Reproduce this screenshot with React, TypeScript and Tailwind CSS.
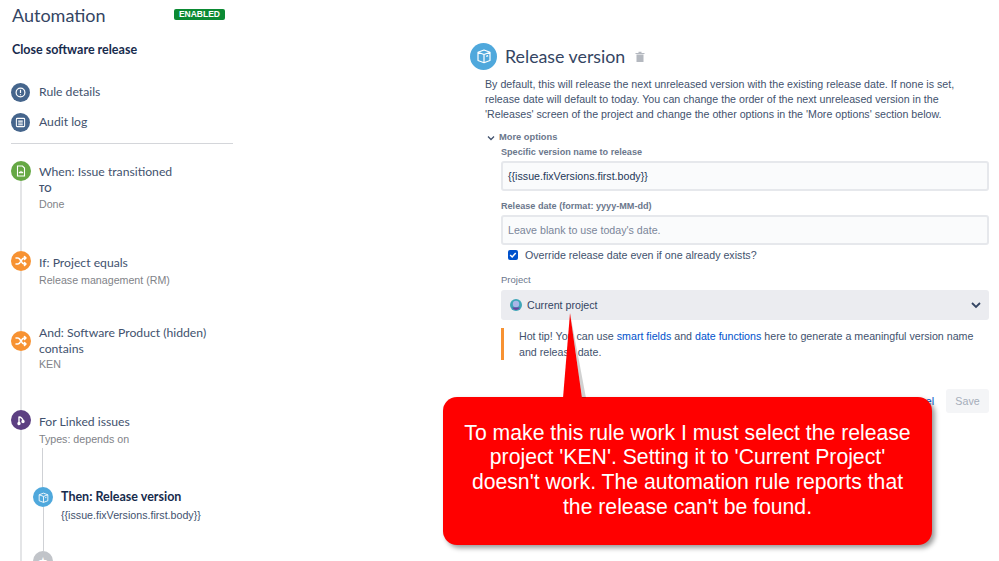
import React from "react";

const Shuffle = () => (
  <svg width="12" height="12" viewBox="0 0 24 24" fill="none" stroke="white" strokeWidth="3" strokeLinecap="round" strokeLinejoin="round">
    <path d="M2 6h4c5 0 7 12 12 12h4M2 18h4c5 0 7-12 12-12h4M19 3l3 3-3 3M19 15l3 3-3 3" />
  </svg>
);

const Box = ({ s }: { s: number }) => (
  <svg width={s} height={s} viewBox="0 0 24 24" fill="none" stroke="white" strokeWidth="1.6" strokeLinejoin="round">
    <path d="M4 7l8-3 8 3v11l-8 3-8-3zM4 7l8 3 8-3M12 10v11" />
    <path d="M15 12.5l2.5-1" />
  </svg>
);

function Row({ h, color, icon, title, titleClass, sub, children }: { h: string; color: string; icon: React.ReactNode; title: React.ReactNode; titleClass: string; sub?: React.ReactNode; children?: React.ReactNode }) {
  return (
    <div className={`flex ${h}`}>
      <div className="flex w-[20px] shrink-0 flex-col items-center">
        <div className={`flex h-[20px] w-[20px] shrink-0 items-center justify-center rounded-full ${color}`}>{icon}</div>
        <div className="w-[2px] flex-1 bg-[#e4e5e7]" />
      </div>
      <div className="ml-[8px] min-w-0 flex-1">
        <div className={`text-[12.2px] text-[#42526e] [font-family:Lato,sans-serif] ${titleClass}`}>{title}</div>
        {sub}
        {children}
      </div>
    </div>
  );
}

const Sub = ({ children, className = "" }: { children: React.ReactNode; className?: string }) => (
  <div className={`text-[10.67px] text-[#7f8388] [font-family:'Liberation_Sans',sans-serif] ${className}`}>{children}</div>
);

export default function App() {
  return (
    <div className="relative flex h-[561px] w-[999px] overflow-hidden bg-white text-[#42526e] [font-family:'Liberation_Sans',sans-serif]">
      <aside className="ml-[11px] flex h-[561px] w-[222px] shrink-0 flex-col overflow-hidden">
        <div className="mt-[3px] flex h-[24px] items-center justify-between pl-[1px] pr-[8px]">
          <span className="text-[18px] leading-[24px] text-[#344563] [font-family:Lato,sans-serif]">Automation</span>
          <span className="mb-[1px] rounded-[2px] bg-[#0b8a33] px-[5px] text-[8.5px] font-bold leading-[11px] text-white">ENABLED</span>
        </div>
        <div className="ml-[1px] mt-[15px] text-[12.5px] font-bold leading-[16px] text-[#172b4d] [font-family:Lato,sans-serif]">Close software release</div>
        <div className="mt-[24px] flex h-[20px] items-center gap-[9px] text-[12.2px] text-[#42526e] [font-family:Lato,sans-serif]">
          <span className="flex h-[19px] w-[19px] items-center justify-center rounded-full bg-[#45658c]">
            <svg width="11" height="11" viewBox="0 0 12 12" fill="none" stroke="white" strokeWidth="1.3"><circle cx="6" cy="6" r="4.8" /><path d="M6 3v3.6M6 8v1" /></svg>
          </span>
          Rule details
        </div>
        <div className="mt-[10px] flex h-[20px] items-center gap-[9px] text-[12.2px] text-[#42526e] [font-family:Lato,sans-serif]">
          <span className="flex h-[19px] w-[19px] items-center justify-center rounded-full bg-[#45658c]">
            <svg width="11" height="11" viewBox="0 0 12 12" fill="none" stroke="white" strokeWidth="1.1"><rect x="1.5" y="1.5" width="9" height="9" rx="1" /><path d="M3.5 4.5h5M3.5 6.5h5M3.5 8.5h5" /></svg>
          </span>
          Audit log
        </div>
        <div className="mt-[11px] h-[1px] w-[222px] shrink-0 bg-[#d4d6da]" />
        <div className="mt-[17px] flex-1">
          <Row
            h="h-[90px]"
            color="bg-[#65a844]"
            icon={<svg width="12" height="12" viewBox="0 0 12 12" fill="none" stroke="white" strokeWidth="1.1"><path d="M2.5 1h5l2 2v8h-7z" /><path d="M4 7l1 1 1-1.5 1 1.5 1-1" /></svg>}
            title="When: Issue transitioned"
            titleClass="mt-[3px] leading-[15px]"
            sub={<><div className="mt-[3px] text-[9px] font-bold leading-[14px] text-[#42526e] [font-family:Lato,sans-serif]">TO</div><Sub className="leading-[17px]">Done</Sub></>}
          />
          <Row h="h-[80px]" color="bg-[#f79232]" icon={<Shuffle />} title="If: Project equals" titleClass="mt-[4px] leading-[15px]" sub={<Sub className="mt-[2px] leading-[17px]">Release management (RM)</Sub>} />
          <Row h="h-[79px]" color="bg-[#f79232]" icon={<Shuffle />} title="And: Software Product (hidden) contains" titleClass="-mt-[6px] leading-[16px]" sub={<Sub className="leading-[15px]">KEN</Sub>} />
          <Row
            h="h-[151px]"
            color="bg-[#5c3f82]"
            icon={<svg width="12" height="12" viewBox="0 0 12 12" fill="none" stroke="white" strokeWidth="1.4"><path d="M4 2.5v7M4 3c2 0 4 2 4 4" /><circle cx="4" cy="9.5" r="1" fill="white" /><circle cx="8" cy="7.5" r="1" fill="white" /></svg>}
            title="For Linked issues"
            titleClass="mt-[4px] leading-[15px]"
            sub={<Sub className="mt-[2px] leading-[17px]">Types: depends on</Sub>}
          >
            <div className="-ml-[6px] flex h-[39px]">
              <div className="ml-[9px] w-[1px] bg-[#cfd1d5]" />
            </div>
            <div className="-ml-[6px] flex h-[64px]">
              <div className="flex w-[20px] flex-col items-center">
                <div className="flex h-[20px] w-[20px] shrink-0 items-center justify-center rounded-full bg-[#4fa8dc]"><Box s={13} /></div>
                <div className="w-[1px] flex-1 bg-[#cfd1d5]" />
              </div>
              <div className="ml-[8px]">
                <div className="text-[12.5px] font-bold leading-[20px] text-[#172b4d] [font-family:Lato,sans-serif]">Then: Release version</div>
                <div className="text-[10.67px] leading-[17px] text-[#42526e]">{"{{issue.fixVersions.first.body}}"}</div>
              </div>
            </div>
            <div className="-ml-[6px] flex h-[20px] w-[20px] items-center justify-center rounded-full bg-[#c1c4c9]">
              <span className="text-[11px] leading-none text-white">★</span>
            </div>
          </Row>
        </div>
      </aside>

      <main className="ml-[237px] flex w-[519px] shrink-0 flex-col">
        <div className="mt-[43px] flex h-[26px] items-center">
          <span className="flex h-[27px] w-[27px] items-center justify-center rounded-full bg-[#4fa8dc]"><Box s={18} /></span>
          <span className="ml-[8px] text-[17.8px] leading-[26px] text-[#344563] [font-family:Lato,sans-serif]">Release version</span>
          <svg className="ml-[10px] mt-[1px]" width="10" height="11" viewBox="0 0 10 11" fill="#b4b8bf"><path d="M0.5 2h9v1h-9zM3.5 0.7h3V2h-3zM1.5 3.5h7V11h-7z" /></svg>
        </div>
        <div className="ml-[15px] mt-[8px] w-[484px] text-[10.67px] leading-[15px] text-[#42526e]">
          By default, this will release the next unreleased version with the existing release date. If none is set, release date will default to today. You can change the order of the next unreleased version in the 'Releases' screen of the project and change the other options in the 'More options' section below.
        </div>
        <div className="ml-[17px] mt-[8px] flex h-[15px] items-center gap-[4px] text-[9.3px] font-bold text-[#6b778c]">
          <svg width="8" height="8" viewBox="0 0 8 8" fill="none" stroke="#42526e" strokeWidth="1.3"><path d="M1 2.5l3 3 3-3" /></svg>
          More options
        </div>
        <div className="ml-[31px] flex w-[488px] flex-col">
          <div className="text-[9.1px] font-bold leading-[15px] text-[#6b778c]">Specific version name to release</div>
          <div className="mt-[1px] flex h-[30px] items-center rounded-[3px] border-2 border-[#e6e8ec] bg-[#fafbfc] px-[5px] text-[10.67px] text-[#253858]">{"{{issue.fixVersions.first.body}}"}</div>
          <div className="mt-[8px] text-[9.1px] font-bold leading-[15px] text-[#6b778c]">Release date (format: yyyy-MM-dd)</div>
          <div className="mt-[1px] flex h-[30px] items-center rounded-[3px] border-2 border-[#e6e8ec] bg-[#fafbfc] px-[5px] text-[10.67px] text-[#7a869a]">Leave blank to use today's date.</div>
          <div className="ml-[7px] mt-[1px] flex h-[17px] items-center gap-[7px] text-[10.67px] text-[#42526e]">
            <span className="flex h-[10px] w-[10px] items-center justify-center rounded-[2px] bg-[#0052cc]">
              <svg width="8" height="8" viewBox="0 0 8 8" fill="none" stroke="white" strokeWidth="1.5"><path d="M1.2 4l2 2 3.5-4" /></svg>
            </span>
            Override release date even if one already exists?
          </div>
          <div className="mt-[9px] text-[9.5px] leading-[15px] text-[#6b778c]">Project</div>
          <div className="mt-[3px] flex h-[30px] items-center justify-between rounded-[3px] bg-[#ebecf0] pl-[9px] pr-[7px] text-[10.67px] text-[#344563]">
            <span className="flex items-center gap-[5px]">
              <svg width="12" height="12" viewBox="0 0 12 12"><circle cx="6" cy="6" r="6" fill="#3fa6b8" /><circle cx="6" cy="5" r="3.2" fill="#a9b6e8" /><path d="M2 8.5h8a4.5 4.5 0 0 1-8 0z" fill="#6b3fa0" /></svg>
              Current project
            </span>
            <svg width="12" height="12" viewBox="0 0 12 12" fill="none" stroke="#344563" strokeWidth="1.8"><path d="M2 4l4 4 4-4" /></svg>
          </div>
          <div className="mt-[8px] flex w-full">
            <div className="h-[32px] w-[3px] shrink-0 bg-[#f79232]" />
            <div className="ml-[15px] w-[465px] text-[10.67px] leading-[16px] text-[#42526e]">
              Hot tip! You can use <span className="text-[#0052cc]">smart fields</span> and <span className="text-[#0052cc]">date functions</span> here to generate a meaningful version name and release date.
            </div>
          </div>
          <div className="mt-[29px] flex items-center justify-end gap-[12px]">
            <span className="text-[10.67px] text-[#0052cc]">Cancel</span>
            <span className="flex h-[24px] w-[43px] items-center justify-center rounded-[3px] bg-[#f4f5f7] text-[10.67px] text-[#a5adba]">Save</span>
          </div>
        </div>
      </main>

      <div className="absolute left-[443px] top-[397px] flex h-[148px] w-[489px] items-center justify-center rounded-[14px] bg-[#ff0000] px-[20px] pb-[2px] text-center text-[21.2px] leading-[24.7px] text-white shadow-[3px_3px_5px_rgba(0,0,0,0.4)]">
        To make this rule work I must select the release project 'KEN'. Setting it to 'Current Project' doesn't work. The automation rule reports that the release can't be found.
      </div>
      <svg className="absolute left-[555px] top-[313px]" width="40" height="85" viewBox="0 0 40 85">
        <path d="M15 0L8 85h19z" fill="#ff0000" />
        <path d="M15 0L27 85h4z" fill="rgba(0,0,0,0.18)" />
      </svg>
    </div>
  );
}
